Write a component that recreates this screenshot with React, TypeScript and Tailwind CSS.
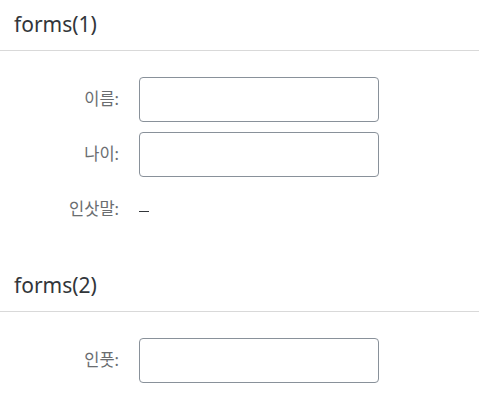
const labelFont = { fontFamily: '"Noto Sans", "Noto Sans CJK KR", sans-serif' };

function SectionHeader({ title }: { title: string }) {
  return (
    <div className="flex h-[51px] items-center border-b border-[#d9d9d9] px-[14px] pb-[2px]">
      <h2 className="text-[21px] leading-none text-[#32363a]">{title}</h2>
    </div>
  );
}

function FieldRow({ label, children }: { label: string; children: React.ReactNode }) {
  return (
    <div className="flex h-[44px] items-center">
      <label className="w-[120px] shrink-0 pr-px text-right text-[16.5px] text-[#6a6d70]">{label}</label>
      <div className="ml-[19px] flex items-center">{children}</div>
    </div>
  );
}

function TextInput() {
  return (
    <input
      type="text"
      className="h-[45px] w-[240px] rounded-[4px] border border-[#89919a] bg-white px-3 text-[14px] text-[#32363a] outline-none"
    />
  );
}

export default function App() {
  return (
    <div className="min-h-[405px] w-[479px] bg-white" style={labelFont}>
      <section>
        <SectionHeader title="forms(1)" />
        <div className="flex flex-col gap-[11px] pb-[30px] pt-[26px]">
          <FieldRow label="이름:">
            <TextInput />
          </FieldRow>
          <FieldRow label="나이:">
            <TextInput />
          </FieldRow>
          <FieldRow label="인삿말:">
            <span className="mt-[5px] inline-block h-px w-[10px] bg-[#32363a]" />
          </FieldRow>
        </div>
      </section>
      <section>
        <SectionHeader title="forms(2)" />
        <div className="flex flex-col pt-[26px]">
          <FieldRow label="인풋:">
            <TextInput />
          </FieldRow>
        </div>
      </section>
    </div>
  );
}
